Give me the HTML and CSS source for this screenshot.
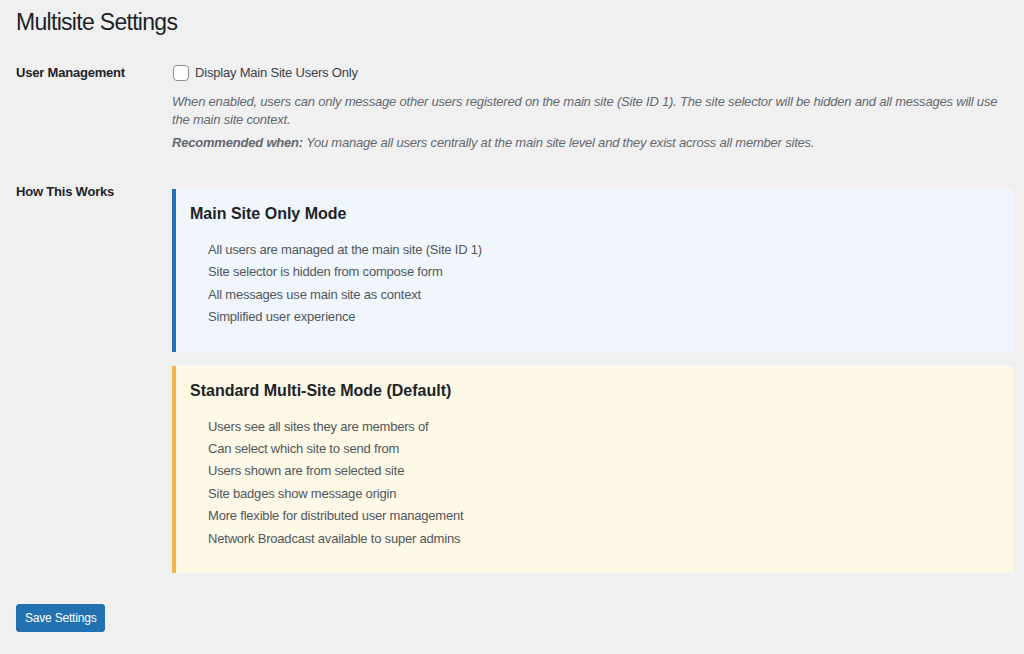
FILE: index.html
```html
<!DOCTYPE html>
<html lang="en">
<head>
  <meta charset="UTF-8">
  <meta name="viewport" content="width=device-width, initial-scale=1.0">
  <title>Multisite Settings</title>
  <link rel="stylesheet" href="styles.css">
</head>
<body>
  <div class="wrap">
    <h1>Multisite Settings</h1>

    <form class="settings-form">
      <div class="settings-row">
        <div class="row-label">User Management</div>
        <div class="row-field">
          <label class="check-label">
            <input type="checkbox" name="main_site_only">
            <span>Display Main Site Users Only</span>
          </label>
          <p class="description">When enabled, users can only message other users registered on the main site (Site ID 1). The site selector will be hidden and all messages will use the main site context.</p>
          <p class="description"><strong>Recommended when:</strong> You manage all users centrally at the main site level and they exist across all member sites.</p>
        </div>
      </div>

      <div class="settings-row">
        <div class="row-label">How This Works</div>
        <div class="row-field">
          <div class="mode-box mode-main">
            <h3>Main Site Only Mode</h3>
            <ul>
              <li>All users are managed at the main site (Site ID 1)</li>
              <li>Site selector is hidden from compose form</li>
              <li>All messages use main site as context</li>
              <li>Simplified user experience</li>
            </ul>
          </div>
          <div class="mode-box mode-standard">
            <h3>Standard Multi-Site Mode (Default)</h3>
            <ul>
              <li>Users see all sites they are members of</li>
              <li>Can select which site to send from</li>
              <li>Users shown are from selected site</li>
              <li>Site badges show message origin</li>
              <li>More flexible for distributed user management</li>
              <li>Network Broadcast available to super admins</li>
            </ul>
          </div>
        </div>
      </div>

      <button type="submit" class="button-primary">Save Settings</button>
    </form>
  </div>
</body>
</html>
```

FILE: styles.css
```css
body {
  margin: 0;
  background: #f0f0f1;
  color: #3c434a;
  font-family: "Liberation Sans", Arial, sans-serif;
  font-size: 13px;
  letter-spacing: -0.2px;
}
.wrap {
  padding: 8px 11px 0 16px;
}
h1 {
  margin: 0;
  font-size: 23px;
  font-weight: 400;
  line-height: 29px;
  letter-spacing: -0.7px;
  color: #1d2327;
}
.settings-form {
  margin-top: 11px;
}
.settings-row {
  display: grid;
  grid-template-columns: 156px 1fr;
  padding: 15px 0;
}
.row-label {
  font-weight: 700;
  line-height: 20px;
  color: #1d2327;
}
.check-label {
  display: flex;
  align-items: center;
  gap: 6px;
  line-height: 20px;
  color: #3c434a;
}
.check-label input {
  appearance: none;
  width: 16px;
  height: 16px;
  margin: 0 0 0 1px;
  border: 1px solid #8c8f94;
  border-radius: 4px;
  background: #fff;
}
.description {
  margin: 5px 0 0;
  font-style: italic;
  line-height: 18px;
  color: #646970;
}
.check-label + .description {
  margin-top: 10px;
}
.description strong {
  font-weight: 700;
}
.mode-box {
  margin-top: 7px;
  padding: 14px 18px 23px 14px;
  border-left: 4px solid;
}
.mode-box + .mode-box {
  margin-top: 14px;
}
.mode-main {
  background: #f0f6fc;
  border-color: #2271b1;
}
.mode-standard {
  background: #fef8e6;
  border-color: #f0b849;
}
.mode-box h3 {
  margin: 0;
  font-size: 16px;
  line-height: 22px;
  letter-spacing: 0;
  color: #1d2327;
}
.mode-box ul {
  margin: 14px 0 0;
  padding-left: 18px;
  list-style: none;
  color: #50575e;
}
.mode-box li {
  line-height: 22.4px;
}
.button-primary {
  margin-top: 16px;
  height: 28px;
  padding: 0 8px;
  border: 1px solid #2271b1;
  border-radius: 3px;
  background: #2271b1;
  color: #fff;
  font-family: inherit;
  font-size: 12px;
  letter-spacing: -0.2px;
  cursor: pointer;
}
```
